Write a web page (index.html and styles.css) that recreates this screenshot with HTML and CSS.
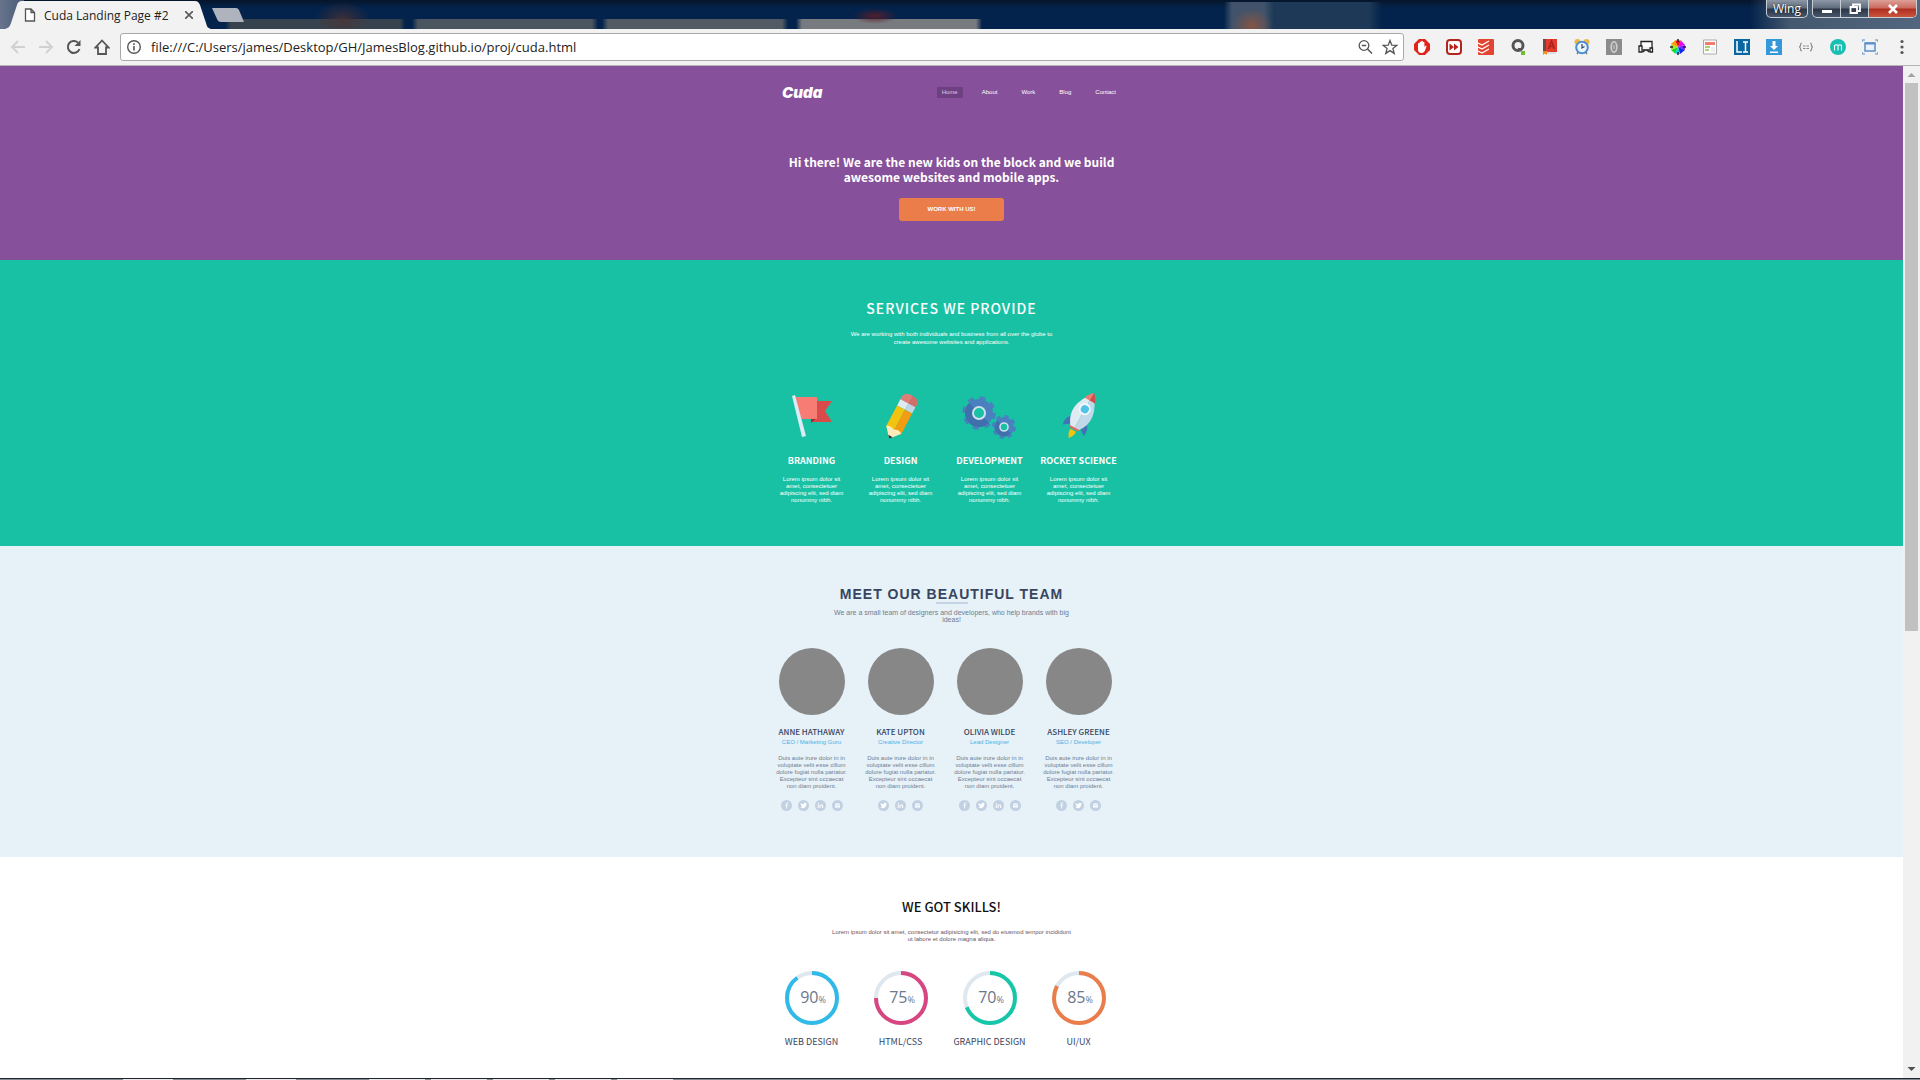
FILE: index.html
```html
<!DOCTYPE html>
<html lang="en">
<head>
<meta charset="utf-8">
<title>Cuda Landing Page #2</title>
<link rel="stylesheet" href="styles.css">
</head>
<body>
<svg class="defs" aria-hidden="true">
  <symbol id="s-fb" viewBox="0 0 22 22"><circle cx="11" cy="11" r="11" fill="#c1d1e2"/><path d="M12.2 17v-5.4h1.9l.3-2.2h-2.2V8c0-.7.2-1.1 1.1-1.1h1.2V5c-3-.5-4.500.6-4.500 2.700v1.700H8.200v2.200H10V17z" fill="#eef5fa"/></symbol>
  <symbol id="s-tw" viewBox="0 0 22 22"><circle cx="11" cy="11" r="11" fill="#c1d1e2"/><path d="M4.500 15c5.500 3.500 12 .3 12-6.200l1.500-1.700-1.800.2L17.300 6l-1.800.6c-2-1.900-4.800-.5-4.400 2-2.200 0-4-1-5.400-2.700-.8 1.500-.4 2.900.8 3.700l-1.200-.3c.1 1.400.9 2.300 2.200 2.700H6.300c.4 1 1.200 1.600 2.400 1.700-1.200 1-2.500 1.400-4.200 1.300z" fill="#fff"/></symbol>
  <symbol id="s-in" viewBox="0 0 22 22"><circle cx="11" cy="11" r="11" fill="#c1d1e2"/><path d="M5.500 9h2v7h-2zM5.500 6h2v2h-2zM9.200 9h2v1c1.300-2 5-1.500 5 1.700V16h-2v-4c0-2-3-2-3 0v4h-2z" fill="#fff"/></symbol>
  <symbol id="s-ml" viewBox="0 0 22 22"><circle cx="11" cy="11" r="11" fill="#c1d1e2"/><path d="M6 7h10v1l-5 3-5-3zM6 9.500l5 3 5-3V15H6z" fill="#fff"/></symbol>
</svg>

<header class="tabstrip">
  <div class="tab">
    <svg class="tab-shape" viewBox="0 0 206 29" preserveAspectRatio="none"><path d="M0 29C4 28 5 26 6 23L12 5C13 2 14 1 17 1H190C193 1 194 3 195 5L201 23C202 27 203 28 206 29Z" fill="#f2f2f2"/></svg>
    <svg class="tab-file" viewBox="0 0 12 14"><path d="M1.500 1h5.500l3.500 3.500V13h-9zM7 1v3.500h3.500" fill="#fff" stroke="#555" stroke-width="1.300"/></svg>
    <span class="tab-title">Cuda Landing Page #2</span>
    <button class="tab-close" aria-label="Close tab"><svg viewBox="0 0 8 8"><path d="M0 0l8 8M8 0l-8 8" stroke="#5a5a5a" stroke-width="1.600"/></svg></button>
  </div>
  <button class="newtab" aria-label="New tab"><svg viewBox="0 0 34 16"><path d="M1 1h24q2 0 3 2l5 12H10q-3 0-4-3z" fill="#aeb3bd"/></svg></button>
  <div class="winctl">
    <button class="wing">Wing</button>
    <div class="wingroup">
      <button aria-label="Minimize"><svg viewBox="0 0 14 12"><rect x="2" y="7" width="10" height="3" fill="#fff"/></svg></button>
      <button aria-label="Restore"><svg viewBox="0 0 14 12"><path d="M5 3V1.500h7V8h-2M2.500 4h6.500v6H2.500z" fill="none" stroke="#fff" stroke-width="1.800"/></svg></button>
      <button class="close" aria-label="Close"><svg viewBox="0 0 14 12"><path d="M3 2l8 8M11 2l-8 8" stroke="#fff" stroke-width="2.600"/></svg></button>
    </div>
  </div>
</header>

<nav class="toolbar" aria-label="Browser">
  <div class="navbtns">
    <button aria-label="Back"><svg viewBox="0 0 16 16"><path d="M15 8H2M8 2L2 8l6 6" fill="none" stroke="#d0d0d0" stroke-width="1.800"/></svg></button>
    <button aria-label="Forward"><svg viewBox="0 0 16 16"><path d="M1 8h13M8 2l6 6-6 6" fill="none" stroke="#d0d0d0" stroke-width="1.800"/></svg></button>
    <button aria-label="Reload"><svg viewBox="0 0 16 16"><path d="M13.500 10A6 6 0 1 1 12 3.600" fill="none" stroke="#555" stroke-width="2"/><path d="M14.500 1v6H8.500z" fill="#555"/></svg></button>
    <button aria-label="Home"><svg viewBox="0 0 16 16"><path d="M8 1.500L1.500 8.500H4V15h8V8.500h2.500z" fill="none" stroke="#555" stroke-width="1.800"/></svg></button>
  </div>
  <div class="omnibox">
    <svg class="i16" viewBox="0 0 16 16"><circle cx="8" cy="8" r="6.300" fill="none" stroke="#555" stroke-width="1.400"/><path d="M7.200 7h1.600v4.500H7.200zM7.200 4.300h1.600v1.600H7.200z" fill="#555"/></svg>
    <input type="text" aria-label="Address" value="file:///C:/Users/james/Desktop/GH/JamesBlog.github.io/proj/cuda.html">
    <svg class="i16" viewBox="0 0 16 16"><circle cx="7" cy="6.500" r="4.800" fill="none" stroke="#555" stroke-width="1.300"/><path d="M4.800 6.500h4.400M10.500 10l4.500 4.500" stroke="#555" stroke-width="1.500"/></svg>
    <svg class="i16 star" viewBox="0 0 16 16"><path d="M8 1.500l1.800 4.700 4.900.2-3.800 3.100 1.300 4.900L8 11.600l-4.200 2.800 1.300-4.900L1.300 6.400l4.900-.2z" fill="none" stroke="#555" stroke-width="1.300"/></svg>
  </div>
  <div class="exts">
    <svg viewBox="0 0 16 16"><path d="M5 0h6l5 5v6l-5 5H5l-5-5V5z" fill="#e2231a"/><path d="M4 8.500V4.500q.8-1 1.600 0V3q.8-1 1.600 0v-.8q.8-.8 1.600 0v1q.8-.8 1.600 0V8l1-1.200q1.200-.3 1.100.8L10.800 12q-1 2-3.300 2Q4 14 4 10.500z" fill="#fff"/></svg>
    <svg viewBox="0 0 16 16"><rect x="1" y="1" width="14" height="14" rx="3" fill="#fff" stroke="#b3261e" stroke-width="2"/><path d="M3.500 4.500L8 8l-4.500 3.500zM8 4.500L12.500 8 8 11.500z" fill="#b3261e"/></svg>
    <svg viewBox="0 0 16 16"><rect width="16" height="16" rx="1" fill="#e44332"/><path d="M0 4l4 2L11 2M0 8l4 2 7-4M0 12l4 2 7-4" fill="none" stroke="#fff" stroke-width="1.300"/></svg>
    <svg viewBox="0 0 16 16"><circle cx="8" cy="6.500" r="5" fill="none" stroke="#555" stroke-width="3"/><path d="M8 9h3v3H8z" fill="#555"/><rect x="11" y="12" width="4" height="4" fill="#6fbe2e"/></svg>
    <svg viewBox="0 0 16 16"><path d="M1 0h14v13H1z" fill="#e23b2e"/><path d="M1 0h3v13H1z" fill="#6b4a45"/><path d="M1 13h13v2H2z" fill="#ddd"/><path d="M6.500 10L9.500 2l3 8M7.500 7.500h4" fill="none" stroke="#a8231b" stroke-width="1.500"/><path d="M1 12h4v4l-2-1.500L1 16z" fill="#f08a24"/></svg>
    <svg viewBox="0 0 16 16"><circle cx="3.500" cy="3" r="3" fill="#f0b548"/><circle cx="12.500" cy="3" r="3" fill="#f0b548"/><path d="M3 15l2-3M13 15l-2-3" stroke="#777" stroke-width="1.500"/><circle cx="8" cy="8.500" r="5.800" fill="#eaf4fc" stroke="#4b8ed0" stroke-width="2"/><path d="M8 5v4l2.500-1.500" fill="none" stroke="#345" stroke-width="1.200"/></svg>
    <svg viewBox="0 0 16 16"><path d="M0 0h16v16H0z" fill="#8b8b8b"/><ellipse cx="8" cy="8" rx="2.800" ry="5.200" fill="none" stroke="#ccc" stroke-width="1.800"/><path d="M8 6v4" stroke="#ccc"/></svg>
    <svg viewBox="0 0 16 16"><path d="M3 7V2.500h11V9M4.500 11h7" fill="#fff" stroke="#222" stroke-width="1.300"/><path d="M1 7h3v6H1zM12 9h2.500v4H12zM5 13l2-2M11 13l-2-2" fill="#fff" stroke="#222" stroke-width="1.300"/></svg>
    <svg viewBox="0 0 16 16"><path d="M8 8L5 1.500h6z" fill="#e11"/><path d="M8 8l3-6.500L15 6z" fill="#e0e"/><path d="M8 8l7-2v5z" fill="#72f"/><path d="M8 8l7 3-5 4z" fill="#12e"/><path d="M8 8l2 7-5-.5z" fill="#1ce"/><path d="M8 8l-3 6.500L1 11z" fill="#1d2"/><path d="M8 8l-7 3V5z" fill="#9e1"/><path d="M8 8L1 5l4-3.500z" fill="#f90"/><path d="M8 0v3M8 13v3M0 8h3M13 8h3" stroke="#222" stroke-width="1.500"/></svg>
    <svg viewBox="0 0 16 16"><path d="M1.500 1h13v14h-13z" fill="#fff" stroke="#aaa"/><path d="M3 3h10v3H3z" fill="#f47c6c"/><path d="M3 8h5M3 11h4" stroke="#8bc34a" stroke-width="1.500"/><path d="M9 8h4v5H9z" fill="#eee"/></svg>
    <svg viewBox="0 0 16 16"><path d="M0 0h16v16H0z" fill="#0a66a0"/><path d="M3 2v11h5M9 3h5M9 13h5M11.500 3v10" fill="none" stroke="#fff" stroke-width="1.500"/></svg>
    <svg viewBox="0 0 16 16"><path d="M0 0h16v16H0z" fill="#3498db"/><path d="M6.500 2h3v5H12l-4 4-4-4h2.500zM4 12.500h8V14H4z" fill="#fff"/></svg>
    <svg viewBox="0 0 16 16"><path d="M4 4Q2.500 4 2.500 6T1 8q1.500 0 1.500 2T4 12M12 4q1.500 0 1.500 2T15 8q-1.500 0-1.500 2T12 12M5 7h2.500M8.500 7H11M5 9.500h2.500M8.500 9.500H11" fill="none" stroke="#888" stroke-width="1.200"/></svg>
    <svg viewBox="0 0 16 16"><circle cx="8" cy="8" r="8" fill="#17bfb4"/><path d="M4.500 11.500V6.500q1.800-1.500 3.500 0v5M8 6.500q1.800-1.500 3.500 0v5" fill="none" stroke="#fff" stroke-width="1.100"/></svg>
    <svg viewBox="0 0 16 16"><path d="M3 4h10v8H3z" fill="#eaf3fb" stroke="#5a8fc8" stroke-width="1.500"/><path d="M3 4.500h10" stroke="#5a8fc8" stroke-width="2"/><path d="M0 3V1h3M13 1h3v2M0 13v2h3M13 15h3v-2" fill="none" stroke="#5a8fc8" stroke-width="1.200"/></svg>
    <svg viewBox="0 0 16 16"><circle cx="8" cy="2.500" r="1.600" fill="#555"/><circle cx="8" cy="8" r="1.600" fill="#555"/><circle cx="8" cy="13.500" r="1.600" fill="#555"/></svg>
  </div>
</nav>

<div class="viewport">
<main class="page">
  <section class="hero">
    <div class="wrap">
      <div class="topbar">
        <a class="logo" href="#">Cuda</a>
        <ul class="menu">
          <li><a class="on" href="#">Home</a></li><li><a href="#">About</a></li><li><a href="#">Work</a></li><li><a href="#">Blog</a></li><li><a href="#">Contact</a></li>
        </ul>
      </div>
      <h1>Hi there! We are the new kids on the block and we build<br>awesome websites and mobile apps.</h1>
      <button class="cta">WORK WITH US!</button>
    </div>
  </section>

  <section class="services">
    <div class="wrap">
      <h2>SERVICES WE PROVIDE</h2>
      <p class="lead">We are working with both individuals and business from all over the globe to<br>create awesome websites and applications.</p>
      <div class="cols">
        <article>
          <svg class="pic" viewBox="4 1 56 46"><path d="M31 9h21l-7 10 7 11H31z" fill="#d94b4b"/><path d="M31 26h6l-6 5z" fill="#a32d2d"/><path d="M15 5h22v22H20z" fill="#f67c74"/><path d="M12 4l3-1 11 41-4 1z" fill="#dcebf5"/></svg>
          <h3>BRANDING</h3><p>Lorem ipsum dolor sit<br>amet, consectetuer<br>adipiscing elit, sed diam<br>nonummy nibh.</p>
        </article>
        <article>
          <svg class="pic" viewBox="2 -3 56 46"><g transform="rotate(28 28 23)"><path d="M20 3q0-7 8.500-7T37 3v4H20z" fill="#dd7f78"/><path d="M29-4q8 0 8 7v4h-8z" fill="#cf6f6a"/><path d="M20 5h9v7h-9z" fill="#dfeaf2"/><path d="M29 5h8v7h-8z" fill="#bfd6e4"/><path d="M20 12h9v24h-9z" fill="#f2c30f"/><path d="M29 12h8v24h-8z" fill="#f39c12"/><path d="M20 35q4-3 8 0 5-3 9 0l-8.500 10z" fill="#fdebb9"/><path d="M26 42h5L28.500 45z" fill="#333"/></g></svg>
          <h3>DESIGN</h3><p>Lorem ipsum dolor sit<br>amet, consectetuer<br>adipiscing elit, sed diam<br>nonummy nibh.</p>
        </article>
        <article>
          <svg class="pic" viewBox="1 1 56 46"><g fill="none"><circle cx="18" cy="21" r="14.500" stroke="#4a80bf" stroke-width="4.500" stroke-dasharray="5.700 5.690"/><circle cx="18" cy="21" r="10" stroke="#4a80bf" stroke-width="8"/><path d="M8.100 30.900A14 14 0 0 0 27.900 30.900L22.200 25.200A6 6 0 0 1 13.800 16.800L8.100 11.100A14 14 0 0 0 8.100 30.900" fill="#3f70ab"/><circle cx="18" cy="21" r="6" stroke="#cfe0ec" stroke-width="2"/><circle cx="43" cy="35" r="10" stroke="#4a80bf" stroke-width="4" stroke-dasharray="4 3.850"/><circle cx="43" cy="35" r="7" stroke="#4a80bf" stroke-width="6"/><path d="M36.500 41.500A9 9 0 0 0 49.500 41.500L46 38A4 4 0 0 1 40 32L36.500 28.500A9 9 0 0 0 36.500 41.500" fill="#3f70ab"/><circle cx="43" cy="35" r="4" stroke="#cfe0ec" stroke-width="1.600"/></g></svg>
          <h3>DEVELOPMENT</h3><p>Lorem ipsum dolor sit<br>amet, consectetuer<br>adipiscing elit, sed diam<br>nonummy nibh.</p>
        </article>
        <article>
          <svg class="pic" viewBox="-1 -2 56 46"><g transform="rotate(29 28 23)"><path d="M21 24q-7 4-5 13l7-5zM35 24q7 4 5 13l-7-5z" fill="#3f74b5"/><path d="M25 37h6q1 4-3 9-4-5-3-9z" fill="#f1c40f"/><path d="M23 33h10v3H23z" fill="#e2695f"/><path d="M28-5q-18 22-5 39h5z" fill="#dfeaf2"/><path d="M28-5q18 22 5 39h-5z" fill="#bfd9e8"/><path d="M28-6q-5 5-6 9h6z" fill="#f07c72"/><path d="M28-6q5 5 6 9h-6z" fill="#d94b4b"/><circle cx="28" cy="13" r="5" fill="#4fc3ea" stroke="#f4fafd" stroke-width="1.800"/></g></svg>
          <h3>ROCKET SCIENCE</h3><p>Lorem ipsum dolor sit<br>amet, consectetuer<br>adipiscing elit, sed diam<br>nonummy nibh.</p>
        </article>
      </div>
    </div>
  </section>

  <section class="team">
    <div class="wrap">
      <h2>MEET OUR BEAUTIFUL TEAM</h2>
      <p class="lead">We are a small team of designers and developers, who help brands with big<br>ideas!</p>
      <div class="cols">
        <article><div class="avatar"></div><h3>ANNE HATHAWAY</h3><p class="role">CEO / Marketing Guru</p><p>Duis aute irure dolor in in<br>voluptate velit esse cillum<br>dolore fugiat nulla pariatur.<br>Excepteur sint occaecat<br>non diam proident.</p>
          <div class="social"><a href="#" aria-label="Facebook"><svg><use href="#s-fb"/></svg></a><a href="#" aria-label="Twitter"><svg><use href="#s-tw"/></svg></a><a href="#" aria-label="LinkedIn"><svg><use href="#s-in"/></svg></a><a href="#" aria-label="Mail"><svg><use href="#s-ml"/></svg></a></div></article>
        <article><div class="avatar"></div><h3>KATE UPTON</h3><p class="role">Creative Director</p><p>Duis aute irure dolor in in<br>voluptate velit esse cillum<br>dolore fugiat nulla pariatur.<br>Excepteur sint occaecat<br>non diam proident.</p>
          <div class="social"><a href="#" aria-label="Twitter"><svg><use href="#s-tw"/></svg></a><a href="#" aria-label="LinkedIn"><svg><use href="#s-in"/></svg></a><a href="#" aria-label="Mail"><svg><use href="#s-ml"/></svg></a></div></article>
        <article><div class="avatar"></div><h3>OLIVIA WILDE</h3><p class="role">Lead Designer</p><p>Duis aute irure dolor in in<br>voluptate velit esse cillum<br>dolore fugiat nulla pariatur.<br>Excepteur sint occaecat<br>non diam proident.</p>
          <div class="social"><a href="#" aria-label="Facebook"><svg><use href="#s-fb"/></svg></a><a href="#" aria-label="Twitter"><svg><use href="#s-tw"/></svg></a><a href="#" aria-label="LinkedIn"><svg><use href="#s-in"/></svg></a><a href="#" aria-label="Mail"><svg><use href="#s-ml"/></svg></a></div></article>
        <article><div class="avatar"></div><h3>ASHLEY GREENE</h3><p class="role">SEO / Developer</p><p>Duis aute irure dolor in in<br>voluptate velit esse cillum<br>dolore fugiat nulla pariatur.<br>Excepteur sint occaecat<br>non diam proident.</p>
          <div class="social"><a href="#" aria-label="Facebook"><svg><use href="#s-fb"/></svg></a><a href="#" aria-label="Twitter"><svg><use href="#s-tw"/></svg></a><a href="#" aria-label="Mail"><svg><use href="#s-ml"/></svg></a></div></article>
      </div>
    </div>
  </section>

  <section class="skills">
    <div class="wrap">
      <h2>WE GOT SKILLS!</h2>
      <p class="lead">Lorem ipsum dolor sit amet, consectetur adipisicing elit, sed do eiusmod tempor incididunt<br>ut labore et dolore magna aliqua.</p>
      <div class="cols">
        <article><div class="ring"><svg viewBox="0 0 54 54"><circle class="rail" cx="27" cy="27" r="25"/><circle class="arc" cx="27" cy="27" r="25" pathLength="100" stroke="#30bae7" stroke-dasharray="90 100"/></svg><span>90<small>%</small></span></div><h3>WEB DESIGN</h3></article>
        <article><div class="ring"><svg viewBox="0 0 54 54"><circle class="rail" cx="27" cy="27" r="25"/><circle class="arc" cx="27" cy="27" r="25" pathLength="100" stroke="#d74680" stroke-dasharray="75 100"/></svg><span>75<small>%</small></span></div><h3>HTML/CSS</h3></article>
        <article><div class="ring"><svg viewBox="0 0 54 54"><circle class="rail" cx="27" cy="27" r="25"/><circle class="arc" cx="27" cy="27" r="25" pathLength="100" stroke="#15c7a8" stroke-dasharray="69 100"/></svg><span>70<small>%</small></span></div><h3>GRAPHIC DESIGN</h3></article>
        <article><div class="ring"><svg viewBox="0 0 54 54"><circle class="rail" cx="27" cy="27" r="25"/><circle class="arc" cx="27" cy="27" r="25" pathLength="100" stroke="#eb7d4b" stroke-dasharray="83 100"/></svg><span>85<small>%</small></span></div><h3>UI/UX</h3></article>
      </div>
    </div>
  </section>
</main>
<div class="scrollbar">
  <svg viewBox="0 0 17 17"><path d="M4.500 11l4-4 4 4z" fill="#a3a3a3"/></svg>
  <div class="track"><div class="thumb"></div></div>
  <svg viewBox="0 0 17 17"><path d="M4.500 6l4 4 4-4z" fill="#505050"/></svg>
</div>
</div>
<footer class="taskbar"><i class="apart"></i><i class="apart"></i><i></i><i></i><i></i><i></i><i></i></footer>
</body>
</html>
```
FILE: styles.css
```css
* { box-sizing: border-box; }
body {
  margin: 0;
  height: 100vh;
  overflow: hidden;
  display: flex;
  flex-direction: column;
  background: #fff;
  font-family: "Liberation Sans", Arial, sans-serif;
}
h1, h2, h3, p, ul { margin: 0; padding: 0; }
button { margin: 0; padding: 0; border: 0; background: none; font: inherit; }
a { color: inherit; text-decoration: none; }
svg { display: block; flex: none; }
.defs { position: absolute; width: 0; height: 0; }

/* Tab strip */
.tabstrip {
  flex: none;
  height: 29px;
  display: flex;
  align-items: flex-start;
  padding-left: 5px;
  background:
    linear-gradient(90deg, #67748c, #4a5b78) 0 0 / 24px 29px no-repeat,
    radial-gradient(closest-side, rgba(75, 50, 50, .8), transparent) 315px 2px / 55px 34px no-repeat,
    radial-gradient(closest-side, rgba(90, 30, 40, .9), transparent) 852px 8px / 46px 16px no-repeat,
    radial-gradient(closest-side, rgba(150, 85, 60, .8), transparent) 1232px 8px / 40px 36px no-repeat,
    linear-gradient(90deg, transparent, #36434f 6px, #36434f 175px, transparent) 225px 19px / 180px 10px no-repeat,
    linear-gradient(90deg, transparent, #4b555f 6px, #4b555f 180px, transparent) 412px 19px / 186px 10px no-repeat,
    linear-gradient(90deg, transparent, #525b64 6px, #525b64 180px, transparent) 602px 19px / 186px 10px no-repeat,
    linear-gradient(90deg, transparent, #777b80 6px, #777b80 180px, transparent) 796px 19px / 186px 10px no-repeat,
    linear-gradient(90deg, transparent, #40536a 8px, #40536a 40px, #1d3957 50px, #1d3957 145px, transparent) 1224px 2px / 158px 27px no-repeat,
    linear-gradient(90deg, transparent, #44586f 40px, #52667f) 100% 0 / 170px 29px no-repeat,
    linear-gradient(#06152a, #03234c 8px, #03234c);
}
.tab {
  position: relative;
  width: 206px;
  height: 29px;
  display: flex;
  align-items: center;
  gap: 8px;
  padding: 1px 18px 0 19px;
  font-family: "Open Sans", "Noto Sans", sans-serif;
  font-size: 12px;
  color: #222;
}
.tab > * { position: relative; }
.tab .tab-shape { position: absolute; left: 0; top: 0; width: 206px; height: 29px; }
.tab-file { width: 12px; height: 14px; }
.tab-title { flex: 1; white-space: nowrap; }
.tab-close svg { width: 8px; height: 8px; }
.newtab svg { width: 34px; height: 16px; margin-top: 7px; }
.winctl { display: flex; gap: 4px; margin-left: auto; padding-right: 3px; }
.wing, .wingroup {
  height: 18px;
  border: 1px solid #c8ced6;
  border-top: 0;
  border-radius: 0 0 5px 5px;
  background: linear-gradient(#8d97a5, #5f6c7c 8px, #2b3646 9px, #47576b);
  overflow: hidden;
}
.wing {
  width: 42px;
  font: 12px/17px "Open Sans", "Noto Sans", sans-serif;
  color: #fff;
  text-shadow: 0 0 2px #000;
}
.wingroup { display: flex; }
.wingroup button { width: 28px; height: 17px; display: grid; place-items: center; border-right: 1px solid #c8ced6; }
.wingroup svg { width: 14px; height: 12px; }
.wingroup .close { width: 47px; border: 0; background: linear-gradient(#dda096, #cc6a5e 8px, #b02e1f 9px, #c9553d); }

/* Toolbar */
.toolbar {
  flex: none;
  height: 37px;
  display: flex;
  align-items: center;
  gap: 10px;
  padding: 0 10px 1px;
  background: #f2f2f2;
  border-bottom: 1px solid #b6b4b6;
}
.navbtns { display: flex; gap: 12px; width: 100px; }
.navbtns svg, .exts svg, .i16 { width: 16px; height: 16px; }
.omnibox {
  flex: 1;
  height: 28px;
  display: flex;
  align-items: center;
  gap: 9px;
  padding: 0 5px;
  background: #fff;
  border: 1px solid #a9a9a9;
  border-radius: 3px;
}
.omnibox input {
  flex: 1;
  min-width: 0;
  padding: 0;
  border: 0;
  outline: 0;
  background: none;
  color: #222;
  font: 13px/20px "Open Sans", "Noto Sans", sans-serif;
}
.exts { display: flex; gap: 16px; }

/* Page and scroll bar */
.viewport { flex: 1; min-height: 0; display: flex; overflow: hidden; }
.page { flex: 1; min-width: 0; overflow: hidden; background: #fff; }
.scrollbar { width: 17px; display: flex; flex-direction: column; background: #f1f1f1; }
.scrollbar svg { width: 17px; height: 17px; }
.track { flex: 1; padding: 0 2px; }
.thumb { height: 56%; background: #c1c1c1; }
.taskbar {
  flex: none;
  height: 2px;
  display: flex;
  gap: 6px;
  padding-left: 123px;
  border-top: 1px solid #20242c;
  background: #858b93;
}
.taskbar i { width: 56px; height: 1px; background: #e8e8e8; }
.taskbar .apart { width: 50px; margin-right: 67px; }

/* Shared blocks */
.wrap { width: 369px; margin: 0 auto; text-align: center; }
.cols { display: grid; grid-template-columns: repeat(4, 89px); }
.cols article { display: flex; flex-direction: column; align-items: center; white-space: nowrap; }
h1, h2, h3 { font-family: "Noto Sans CJK SC", "Open Sans", sans-serif; white-space: nowrap; }
.lead { white-space: nowrap; font-size: 6px; line-height: 7px; }
.cols p { font-size: 6px; line-height: 7px; }

/* Hero */
.hero { height: 194px; background: #86509a; color: #fff; }
.topbar { display: flex; align-items: center; justify-content: space-between; padding: 15px 15px 0; height: 38px; }
.logo { font: italic 900 15px/22px Inter, sans-serif; }
.menu { display: flex; gap: 14px; list-style: none; font-size: 6px; line-height: 11px; }
.menu a { display: block; padding: 0 5px; }
.menu .on { background: #6e4081; color: #dcc9e2; }
.hero h1 { margin-top: 50px; font-size: 12px; line-height: 15px; }
.cta {
  width: 105px;
  height: 23px;
  margin-top: 14px;
  padding-bottom: 2px;
  border-radius: 3px;
  background: #eb7d4b;
  color: #fff;
  font-size: 6px;
  font-weight: 700;
}

/* Services */
.services { height: 286px; padding-top: 38px; background: #18c1a4; color: #fff; }
.services h2 { font-size: 14px; line-height: 20px; font-weight: 500; letter-spacing: 1px; }
.services .lead { margin-top: 12px; line-height: 8px; }
.services .cols { margin-top: 47px; }
.pic { width: 56px; height: 46px; overflow: visible; }
.services h3 { margin-top: 17px; font-size: 9px; line-height: 10px; }
.services .cols p { margin-top: 10px; }

/* Team */
.team { height: 311px; padding-top: 38px; background: #e6f1f8; color: #6f7d92; }
.team h2 { font: 700 14px/20px "Liberation Sans", Arial, sans-serif; letter-spacing: 1px; color: #38455e; }
.team h2::after { content: ""; display: block; width: 32px; height: 2px; margin: -2px auto 0; background: #c5d4e5; }
.team .lead { margin-top: 5px; font-size: 7px; }
.team .cols { margin-top: 25px; }
.avatar { width: 66px; height: 67px; border-radius: 50%; background: #878787; }
.team h3 { margin-top: 12px; font-size: 8px; line-height: 10px; font-weight: 500; color: #38455e; }
.team .cols .role { margin-top: 2px; color: #49b3e6; }
.team .cols .role + p { margin-top: 9px; }
.social { display: flex; gap: 6px; margin-top: 10px; }
.social svg { width: 11px; height: 11px; }

/* Skills */
.skills { padding: 40px 0 35px; color: #6a5560; }
.skills h2 { font-size: 13px; line-height: 20px; font-weight: 500; color: #111; }
.skills .lead { margin-top: 12px; }
.skills .cols { margin-top: 28px; }
.ring { display: grid; place-items: center; }
.ring > * { grid-area: 1 / 1; }
.ring svg { width: 54px; height: 54px; transform: rotate(-90deg); }
.ring circle { fill: none; stroke-width: 4; }
.rail { stroke: #dfe8ef; }
.ring span { padding-left: 3px; font: 400 16px/20px "Open Sans", sans-serif; color: #6b788d; }
.ring small { font-size: 9px; }
.skills h3 { margin-top: 12px; font-size: 9px; line-height: 10px; font-weight: 400; color: #38455e; }
```
